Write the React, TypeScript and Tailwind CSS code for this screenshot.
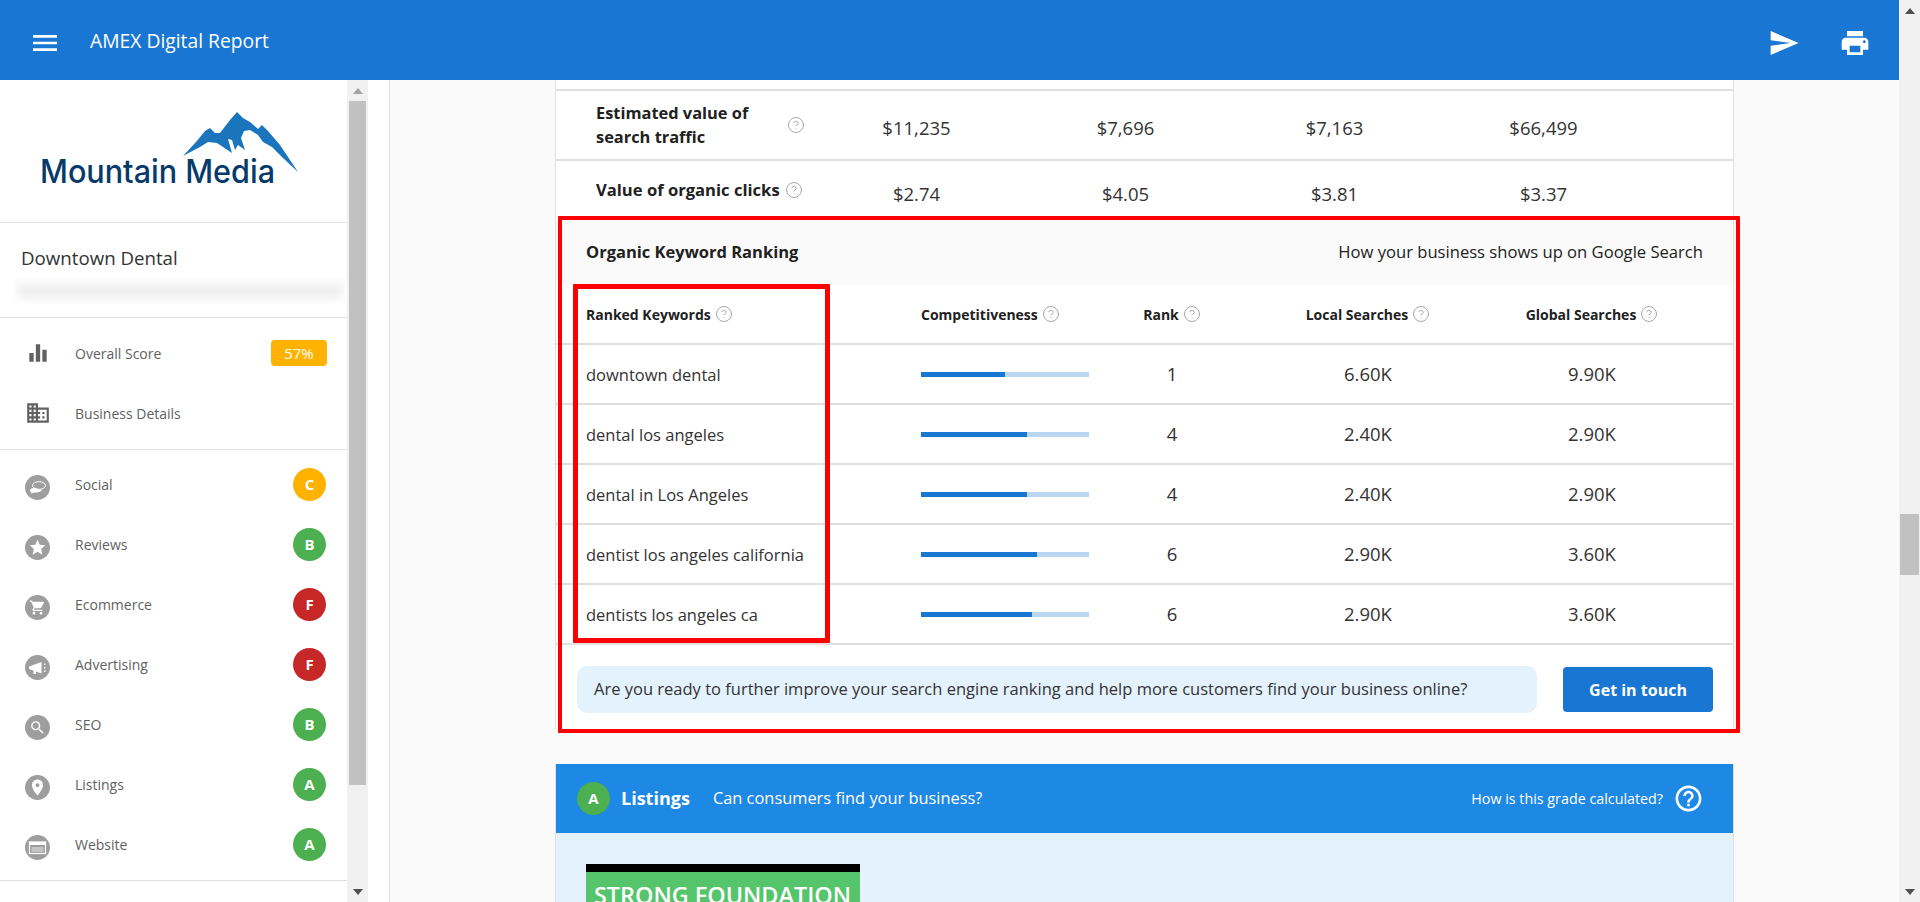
import React, { type FC, type ReactNode } from "react";
import { CircleHelp } from "lucide-react";
import {
  MdMenu,
  MdSend,
  MdPrint,
  MdEqualizer,
  MdDomain,
  MdStar,
  MdShoppingCart,
  MdSearch,
  MdPlace,
  MdHelpOutline,
} from "react-icons/md";

const BubblesIcon: FC = () => (
  <svg width="25" height="25" viewBox="0 0 25 25" fill="none">
    <ellipse cx="14" cy="10.5" rx="6.5" ry="3.8" stroke="#fff" strokeWidth="1" />
    <path d="M5 16 C5 13.5 8 12.6 10.5 12.8 C12 14.4 15 15 17 14.6 C16.6 16.8 13 17.8 10 17.4 L5.5 18.4 L6.4 17.1 C5.5 16.8 5 16.5 5 16 Z" fill="#fff" />
  </svg>
);

const MegaphoneIcon: FC = () => (
  <svg width="25" height="25" viewBox="0 0 25 25" fill="#fff">
    <path d="M4 11.5 L16.5 7 L16.5 18.5 L11 16.5 L11 19 L8.5 19 L8.5 15.5 L4 14 Z" />
    <rect x="19" y="8.5" width="1.5" height="1.5" />
    <rect x="19" y="12" width="1.5" height="1.5" />
    <rect x="19" y="15.5" width="1.5" height="1.5" />
  </svg>
);

const WindowIcon: FC = () => (
  <svg width="25" height="25" viewBox="0 0 25 25" fill="none">
    <rect x="4.5" y="7" width="16" height="11.5" stroke="#fff" strokeWidth="1.2" />
    <rect x="4.5" y="7" width="16" height="3" fill="#fff" />
    <rect x="6.5" y="12" width="12" height="5" fill="#c4c4c4" />
  </svg>
);

const navItems = [
  { label: "Social", grade: "C", color: "bg-[#ffb300]", icon: <BubblesIcon /> },
  { label: "Reviews", grade: "B", color: "bg-[#4caf50]", icon: <MdStar size={19} /> },
  { label: "Ecommerce", grade: "F", color: "bg-[#c62828]", icon: <MdShoppingCart size={17} /> },
  { label: "Advertising", grade: "F", color: "bg-[#c62828]", icon: <MegaphoneIcon /> },
  { label: "SEO", grade: "B", color: "bg-[#4caf50]", icon: <MdSearch size={17} /> },
  { label: "Listings", grade: "A", color: "bg-[#4caf50]", icon: <MdPlace size={19} /> },
  { label: "Website", grade: "A", color: "bg-[#4caf50]", icon: <WindowIcon /> },
];

const keywords = [
  { name: "downtown dental", pct: 50, rank: 1, local: "6.60K", global: "9.90K" },
  { name: "dental los angeles", pct: 63, rank: 4, local: "2.40K", global: "2.90K" },
  { name: "dental in Los Angeles", pct: 63, rank: 4, local: "2.40K", global: "2.90K" },
  { name: "dentist los angeles california", pct: 69, rank: 6, local: "2.90K", global: "3.60K" },
  { name: "dentists los angeles ca", pct: 66, rank: 6, local: "2.90K", global: "3.60K" },
];

const Help: FC = () => (
  <CircleHelp size={18} strokeWidth={1.2} className="shrink-0 text-[#9e9e9e]" />
);

const Arrow: FC<{ up?: boolean; light?: boolean }> = ({ up, light }) => (
  <svg width="10" height="6" viewBox="0 0 10 6" className={light ? "text-[#a3a3a3]" : "text-[#505050]"}>
    <path d={up ? "M5 0 L10 6 L0 6 Z" : "M0 0 L10 0 L5 6 Z"} fill="currentColor" />
  </svg>
);

const Logo: FC = () => (
  <svg width="347" height="130" viewBox="0 0 347 130" className="mt-[10px]">
    <path
      d="M183 66 L196 52 L205 41 L210 38 L215 43 L220 43 L230 30 L237 22 L243 28 L250 32 L258 39 L262 35 L268 41 L280 55 L298 82 L283 68 L272 57 L263 52 L258 45 L250 40 L244 41 L241 48 L245 60 L238 55 L235 60 L232 50 L228 49 L232 63 L217 53 L208 52 L200 57 Z"
      fill="#1a75bc"
    />
    <text
      x="40"
      y="93"
      fontSize="32"
      fontWeight="500"
      fill="#063a6b"
      textLength="235"
      lengthAdjust="spacingAndGlyphs"
      className="font-['Inter',sans-serif]"
    >
      Mountain Media
    </text>
  </svg>
);

const Sidebar: FC = () => (
  <div className="flex h-full w-[390px] shrink-0 border-r border-[#e0e0e0] bg-white">
    <div className="flex w-[347px] flex-col overflow-hidden">
      <div className="h-[143px] shrink-0 border-b border-[#e0e0e0]">
        <Logo />
      </div>
      <div className="h-[95px] shrink-0 border-b border-[#e0e0e0] pt-[21px]">
        <p className="pl-[21px] text-[18.7px] leading-[28px] text-[#333]">Downtown Dental</p>
        <div className="ml-[15px] mt-[5px] h-[27px] w-[330px] overflow-hidden">
          <div className="mt-[6px] h-[16px] rounded-full bg-[#efefef] blur-[5px]" />
        </div>
      </div>
      <div className="h-[132px] shrink-0 border-b border-[#e0e0e0] pt-[5px] text-[14px] text-[#616161]">
        <div className="flex h-[60px] items-center">
          <span className="flex w-[75px] justify-center text-[#616161]">
            <MdEqualizer size={26} />
          </span>
          <span>Overall Score</span>
          <span className="ml-auto mr-[20px] flex h-[26px] w-[56px] items-center justify-center rounded-sm bg-[#ffb300] text-[15px] text-white">
            57%
          </span>
        </div>
        <div className="flex h-[60px] items-center">
          <span className="flex w-[75px] justify-center text-[#616161]">
            <MdDomain size={26} />
          </span>
          <span>Business Details</span>
        </div>
      </div>
      <div className="h-[431px] shrink-0 border-b border-[#e0e0e0] pt-[4px] text-[14px] text-[#616161]">
        {navItems.map((item) => (
          <div key={item.label} className="flex h-[60px] items-center">
            <span className="flex w-[75px] justify-center">
              <span className="mt-[6px] flex h-[25px] w-[25px] items-center justify-center rounded-full bg-[#9e9e9e] text-white">
                {item.icon}
              </span>
            </span>
            <span>{item.label}</span>
            <span
              className={`ml-auto mr-[21px] flex h-[33px] w-[33px] items-center justify-center rounded-full text-[15px] font-bold text-white ${item.color}`}
            >
              {item.grade}
            </span>
          </div>
        ))}
      </div>
    </div>
    <div className="flex w-[21px] shrink-0 flex-col items-center bg-[#f1f1f1]">
      <div className="flex h-[21px] shrink-0 items-center">
        <Arrow up light />
      </div>
      <div className="h-[684px] w-[17px] shrink-0 bg-[#c1c1c1]" />
      <div className="mt-auto flex h-[21px] shrink-0 items-center">
        <Arrow />
      </div>
    </div>
    <div className="flex-1 bg-white" />
  </div>
);

const ValueRow: FC<{ label: ReactNode; values: string[]; className: string; valueClass: string }> = ({
  label,
  values,
  className,
  valueClass,
}) => (
  <div className={`grid grid-cols-[256px_209px_209px_209px_209px] items-center ${className}`}>
    <div className="pl-[40px]">{label}</div>
    {values.map((v) => (
      <div key={v} className={`text-center text-[18.5px] text-[#333] ${valueClass}`}>
        {v}
      </div>
    ))}
  </div>
);

const keywordCols = "grid grid-cols-[335px_168px_166px_226px_222px] pl-[30px]";

const KeywordSection: FC = () => (
  <div className="relative">
    <div className="absolute -top-[4px] left-[2px] z-10 h-[517px] w-[1182px] rounded-[1px] border-[4.5px] border-[#ff0000]" />
    <div className="absolute left-[17px] top-[64px] z-10 h-[359px] w-[257px] rounded-[1px] border-[5px] border-[#ff0000]" />
    <div className="flex h-[65px] items-center justify-between bg-[#fafafa] pl-[30px] pr-[30px] text-[#212121]">
      <span className="text-[16.5px] font-bold">Organic Keyword Ranking</span>
      <span className="text-[16.6px]">How your business shows up on Google Search</span>
    </div>
    <div className={`${keywordCols} h-[60px] items-center border-b-2 border-[#e0e0e0] text-[14px] font-bold text-[#212121]`}>
      <div className="flex items-center gap-[4px]">
        Ranked Keywords <Help />
      </div>
      <div className="flex items-center gap-[4px]">
        Competitiveness <Help />
      </div>
      <div className="flex items-center justify-center gap-[4px]">
        Rank <Help />
      </div>
      <div className="flex items-center justify-center gap-[4px]">
        Local Searches <Help />
      </div>
      <div className="flex items-center justify-center gap-[4px]">
        Global Searches <Help />
      </div>
    </div>
    {keywords.map((k) => (
      <div key={k.name} className={`${keywordCols} h-[60px] items-center border-b-2 border-[#e0e0e0] text-[#333]`}>
        <div className="pt-[2px] text-[16.5px]">{k.name}</div>
        <div className="h-[5px] bg-[#bad6f1]">
          <div className="h-full bg-[#1976d2]" style={{ width: `${k.pct}%` }} />
        </div>
        <div className="text-center text-[18.5px]">{k.rank}</div>
        <div className="text-center text-[18.5px]">{k.local}</div>
        <div className="text-center text-[18.5px]">{k.global}</div>
      </div>
    ))}
    <div className="flex h-[84px] items-start pl-[21px] pt-[21px]">
      <div className="flex h-[47px] w-[960px] items-center rounded-[10px] bg-[#e3f2fd] pl-[17px] text-[16.5px] text-[#333]">
        Are you ready to further improve your search engine ranking and help more customers find your business online?
      </div>
      <button className="ml-[26px] mt-[1px] h-[45px] w-[150px] rounded bg-[#1976d2] text-[16px] font-bold text-white">
        Get in touch
      </button>
    </div>
  </div>
);

export default function App() {
  return (
    <div className="flex h-[902px] w-full overflow-hidden bg-[#fafafa] font-['Open_Sans',sans-serif]">
      <div className="flex h-full w-[1899px] flex-col">
        <header className="flex h-[80px] shrink-0 items-center bg-[#1976d2] pt-[6px] text-white">
          <MdMenu size={32} className="ml-[29px]" />
          <span className="-mt-[4px] ml-[29px] text-[19.3px]">AMEX Digital Report</span>
          <MdSend size={32} className="ml-auto" />
          <MdPrint size={32} className="ml-[39px] mr-[28px]" />
        </header>
        <div className="flex min-h-0 flex-1">
          <Sidebar />
          <main className="flex-1 overflow-hidden">
            <div className="ml-[165px] w-[1179px]">
              <div className="border-x border-[#e0e0e0] bg-white">
                <div className="h-[11px] border-b-2 border-[#e0e0e0]" />
                <ValueRow
                  className="h-[70px] border-b-2 border-[#e0e0e0]"
                  valueClass="pt-[5px]"
                  values={["$11,235", "$7,696", "$7,163", "$66,499"]}
                  label={
                    <div className="flex w-[209px] items-center justify-between text-[16.4px] font-bold leading-[24px] text-[#212121]">
                      <span>
                        Estimated value of
                        <br />
                        search traffic
                      </span>
                      <Help />
                    </div>
                  }
                />
                <ValueRow
                  className="h-[59px]"
                  valueClass="pt-[6px]"
                  values={["$2.74", "$4.05", "$3.81", "$3.37"]}
                  label={
                    <div className="flex items-center gap-[5px] text-[16.6px] font-bold text-[#212121]">
                      Value of organic clicks <Help />
                    </div>
                  }
                />
                <KeywordSection />
              </div>
              <div className="mt-[35px] border border-t-0 border-[#e0e0e0] bg-[#e3f2fd]">
                <div className="flex h-[69px] items-center bg-[#1e88e5] pl-[21px] pr-[29px] text-white">
                  <span className="flex h-[33px] w-[33px] items-center justify-center rounded-full bg-[#4caf50] text-[15px] font-bold">
                    A
                  </span>
                  <span className="ml-[11px] text-[18px] font-bold">Listings</span>
                  <span className="ml-[23px] text-[16.4px]">Can consumers find your business?</span>
                  <span className="ml-auto text-[14.3px]">How is this grade calculated?</span>
                  <MdHelpOutline size={31} className="ml-[10px]" />
                </div>
                <div className="h-[200px] pl-[30px] pt-[31px]">
                  <div className="h-[200px] w-[274px] border-t-8 border-black bg-[#55c56c] pl-[8px] pt-[6px] text-[23.4px] font-semibold text-white">
                    STRONG FOUNDATION
                  </div>
                </div>
              </div>
            </div>
          </main>
        </div>
      </div>
      <div className="flex h-full w-[21px] shrink-0 flex-col items-center bg-[#f1f1f1]">
        <div className="flex h-[21px] shrink-0 items-center">
          <Arrow up />
        </div>
        <div className="mt-[493px] h-[61px] w-[19px] shrink-0 bg-[#c1c1c1]" />
        <div className="mt-auto flex h-[21px] shrink-0 items-center">
          <Arrow />
        </div>
      </div>
    </div>
  );
}
